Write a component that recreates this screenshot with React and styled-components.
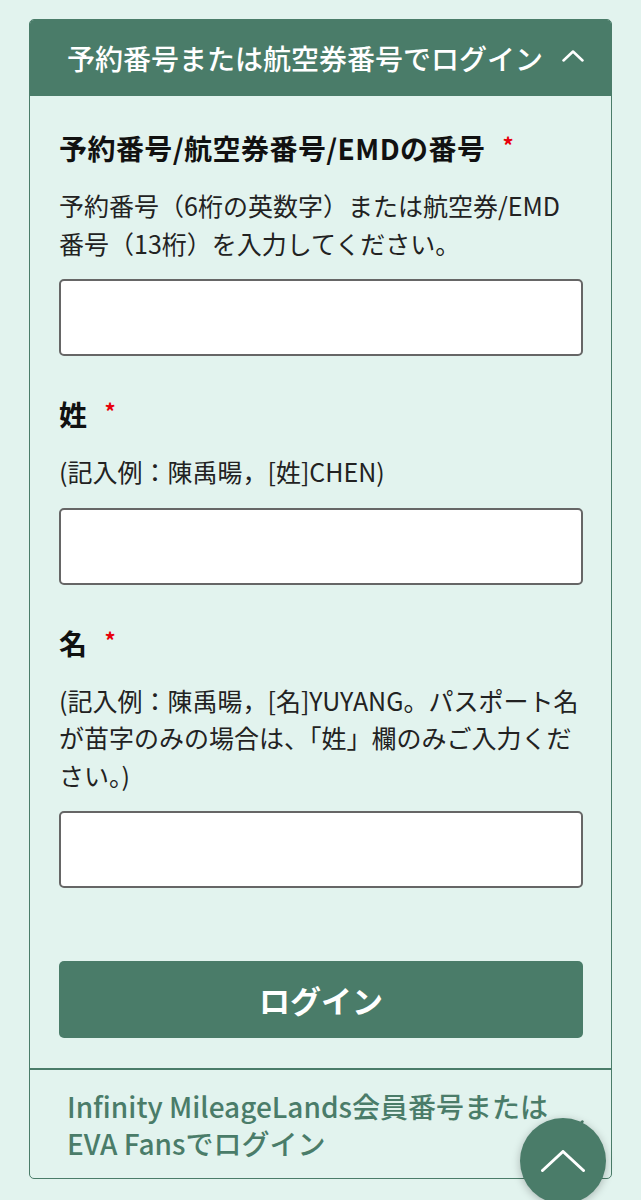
import React from 'react';
import styled, { createGlobalStyle } from 'styled-components';

const GREEN = '#4a7c69';

const Global = createGlobalStyle`
  html, body {
    margin: 0;
    padding: 0;
    background: #e2f3ee;
    font-family: "Noto Sans CJK JP", "Noto Sans", sans-serif;
  }
  * { box-sizing: border-box; }
`

const Page = styled.div`
  padding: 19px 29px 40px 29px;
  min-height: 1200px;
`
const Card = styled.div`
  border: 1px solid ${GREEN};
  border-radius: 5px;
  background: #e2f3ee;
  overflow: hidden;
`
const Toggle = styled.div`
  display: flex;
  align-items: center;
  gap: 12px;
  padding: ${props => props.open ? '0 27px 0 37px' : '18px 27px 16px 37px'};
  min-height: ${props => props.open ? '76px' : 'auto'};
  background: ${props => props.open ? GREEN : 'transparent'};
  color: ${props => props.open ? '#fff' : GREEN};
  border-top: ${props => props.open ? 'none' : `2px solid ${GREEN}`};
`
const ToggleText = styled.span`
  flex: 1;
  font-size: 28px;
  font-weight: 500;
  line-height: 37px;
`
const Chevron = styled.svg`
  flex: none;
  width: 22px;
  height: 12px;
  align-self: ${props => props.top ? 'center' : 'flex-start'};
  margin-top: ${props => props.top ? '-4px' : '32px'};
`
const Body = styled.div`
  padding: 31px 28px 30px 29px;
  display: flex;
  flex-direction: column;
`
const Field = styled.div`
  display: flex;
  flex-direction: column;
  margin-bottom: 37px;
`
const Label = styled.div`
  display: flex;
  align-items: flex-start;
  font-size: 28px;
  font-weight: 700;
  line-height: 42px;
  letter-spacing: 0.45px;
  color: #111;
`
const Required = styled.span`
  color: #e8000b;
  font-size: 22px;
  line-height: 22px;
  margin-left: 17px;
  margin-top: 6px;
`
const Help = styled.p`
  margin: 18px 0 17px 0;
  font-size: 25px;
  line-height: 37.5px;
  color: #222;
`
const Input = styled.input`
  height: 77px;
  width: 100%;
  border: 2px solid #666;
  border-radius: 5px;
  background: #fff;
  font-size: 25px;
  padding: 0 14px;
  outline: none;
`
const Submit = styled.button`
  margin-top: 36px;
  height: 77px;
  width: 100%;
  border: none;
  border-radius: 5px;
  background: ${GREEN};
  color: #fff;
  font-family: inherit;
  font-size: 31px;
  font-weight: 700;
  cursor: pointer;
`
const ScrollTop = styled.button`
  position: fixed;
  right: 35px;
  bottom: -4px;
  width: 86px;
  height: 86px;
  border-radius: 50%;
  border: none;
  background: ${GREEN};
  box-shadow: 0 2px 8px rgba(0, 0, 0, 0.25);
  display: flex;
  align-items: center;
  justify-content: center;
  padding: 0;
  cursor: pointer;
`

const UpIcon = ({ w = 22, h = 12, stroke = 2.5, color = '#fff' }) => (
  <svg width={w} height={h} viewBox={`0 0 ${w} ${h}`} fill="none">
    <polyline points={`1.5,${h - 1.5} ${w / 2},1.5 ${w - 1.5},${h - 1.5}`} stroke={color} strokeWidth={stroke} strokeLinecap="round" strokeLinejoin="round" />
  </svg>
)

const fields = [
  {
    name: 'booking',
    label: '予約番号/航空券番号/EMDの番号',
    help: '予約番号（6桁の英数字）または航空券/EMD番号（13桁）を入力してください。',
  },
  {
    name: 'lastName',
    label: '姓',
    help: '(記入例：陳禹暘，[姓]CHEN)',
  },
  {
    name: 'firstName',
    label: '名',
    help: '(記入例：陳禹暘，[名]YUYANG。パスポート名が苗字のみの場合は、「姓」欄のみご入力ください。)',
  },
];

export default function App() {
  return (
    <Page>
      <Global />
      <Card>
        <Toggle open>
          <ToggleText>予約番号または航空券番号でログイン</ToggleText>
          <Chevron top viewBox="0 0 22 12" fill="none">
            <polyline points="1.5,10.5 11,1.5 20.5,10.5" stroke="#fff" strokeWidth="2.5" strokeLinecap="round" strokeLinejoin="round" />
          </Chevron>
        </Toggle>
        <Body>
          {fields.map(f => (
            <Field key={f.name}>
              <Label>
                {f.label}
                <Required>*</Required>
              </Label>
              <Help>{f.help}</Help>
              <Input name={f.name} type="text" />
            </Field>
          ))}
          <Submit type="button">ログイン</Submit>
        </Body>
        <Toggle>
          <ToggleText>Infinity MileageLands会員番号またはEVA Fansでログイン</ToggleText>
          <Chevron viewBox="0 0 22 12" fill="none">
            <polyline points="1.5,1.5 11,10.5 20.5,1.5" stroke={GREEN} strokeWidth="2.5" strokeLinecap="round" strokeLinejoin="round" />
          </Chevron>
        </Toggle>
      </Card>
      <ScrollTop aria-label="top">
        <UpIcon w={44} h={22} stroke={3} />
      </ScrollTop>
    </Page>
  );
}
